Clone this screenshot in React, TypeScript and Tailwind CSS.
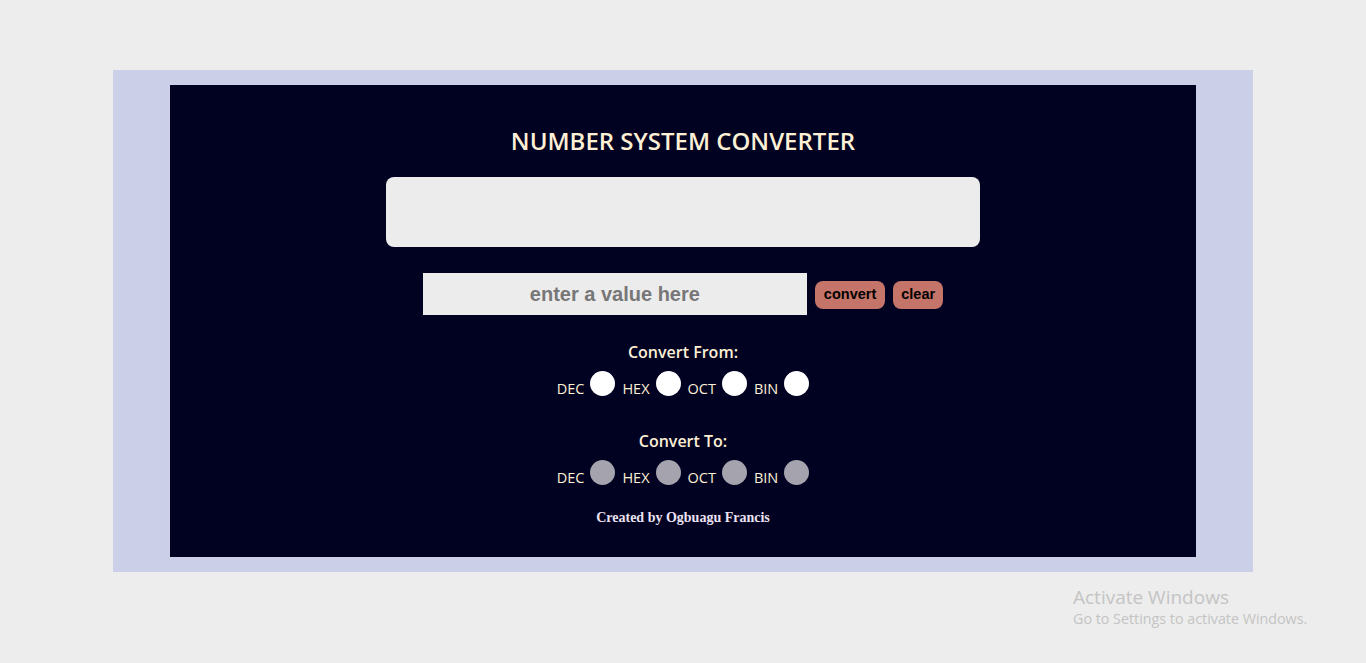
import React from "react";

const bases = ["DEC", "HEX", "OCT", "BIN"];

function RadioRow({ name, muted }: { name: string; muted?: boolean }) {
  return (
    <div className="flex items-end justify-center gap-[7px]">
      {bases.map((b) => (
        <label key={b} className="flex items-end gap-[6px]">
          <span className="font-['Open_Sans',sans-serif] text-[14.5px] leading-[16px] text-[#fdf0d5]">{b}</span>
          <input
            type="radio"
            name={name}
            className={
              "m-0 mb-[1px] h-[25px] w-[25px] shrink-0 appearance-none rounded-full " +
              (muted ? "bg-[#a5a4ae]" : "bg-white")
            }
          />
        </label>
      ))}
    </div>
  );
}

export default function App() {
  return (
    <div className="relative h-[663px] w-full bg-[#ededed] pt-[70px] font-['Open_Sans',sans-serif]">
      <div className="mx-[113px] bg-[#cbd0e8] px-[57px] py-[15px]">
        <div className="flex h-[472px] flex-col items-center bg-[#010222] pt-[41px]">
          <h1 className="h-[30px] text-[24px] leading-[30px] font-semibold text-[#fdf0d5]">
            NUMBER SYSTEM CONVERTER
          </h1>
          <div className="mt-[21px] h-[70px] w-[594px] rounded-[8px] bg-[#ececec]" />
          <div className="mt-[26px] flex items-start gap-[8px]">
            <input
              type="text"
              placeholder="enter a value here"
              className="h-[42px] w-[384px] bg-[#ececec] text-center font-['Liberation_Sans',sans-serif] text-[20px] font-bold text-[#333] outline-none placeholder:text-[#777]"
            />
            <button className="mt-[8px] h-[28px] rounded-[8px] bg-[#c47468] px-[9px] font-['Liberation_Sans',sans-serif] text-[14.5px] font-bold text-black">
              convert
            </button>
            <button className="mt-[8px] h-[28px] rounded-[8px] bg-[#c47468] px-[8px] font-['Liberation_Sans',sans-serif] text-[14.5px] font-bold text-black">
              clear
            </button>
          </div>
          <p className="mt-[26px] text-[16px] leading-[22px] font-semibold text-[#fdf0d5]">
            Convert From:
          </p>
          <div className="mt-[8px]">
            <RadioRow name="from" />
          </div>
          <p className="mt-[33px] text-[16px] leading-[22px] font-semibold text-[#fdf0d5]">
            Convert To:
          </p>
          <div className="mt-[8px]">
            <RadioRow name="to" muted />
          </div>
          <p className="mt-[21px] font-['Liberation_Serif',serif] text-[14px] font-bold text-[#ece2f2]">
            Created by Ogbuagu Francis
          </p>
        </div>
      </div>
      <div className="absolute top-[585px] left-[1073px] text-[#c4c4c4]">
        <div className="text-[19px] leading-[24px]">Activate Windows</div>
        <div className="text-[14.3px] leading-[20px]">Go to Settings to activate Windows.</div>
      </div>
    </div>
  );
}
